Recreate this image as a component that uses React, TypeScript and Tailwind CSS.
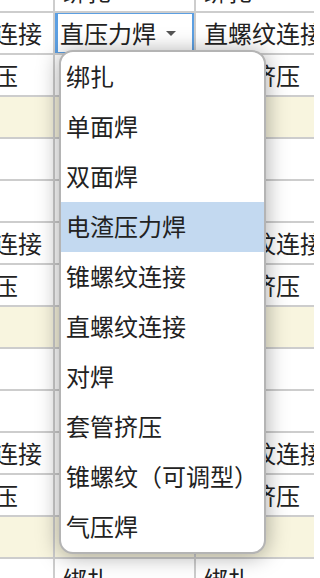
import React from 'react';

type Row = { cells: [string, string, string]; tone?: 'yellow' };

const rows: Row[] = [
  { cells: ['绑扎', '绑扎', '绑扎'] },
  { cells: ['直螺纹连接', '', '直螺纹连接'] },
  { cells: ['套管挤压', '', '套管挤压'] },
  { cells: ['', '', ''], tone: 'yellow' },
  { cells: ['', '', ''] },
  { cells: ['绑扎', '', '绑扎'] },
  { cells: ['直螺纹连接', '', '直螺纹连接'] },
  { cells: ['套管挤压', '', '套管挤压'] },
  { cells: ['', '', ''], tone: 'yellow' },
  { cells: ['', '', ''] },
  { cells: ['绑扎', '', '绑扎'] },
  { cells: ['直螺纹连接', '', '直螺纹连接'] },
  { cells: ['套管挤压', '', '套管挤压'] },
  { cells: ['', '', ''], tone: 'yellow' },
  { cells: ['绑扎', '绑扎', '绑扎'] },
];

const options = [
  '绑扎',
  '单面焊',
  '双面焊',
  '电渣压力焊',
  '锥螺纹连接',
  '直螺纹连接',
  '对焊',
  '套管挤压',
  '锥螺纹（可调型）',
  '气压焊',
];

const font = { fontFamily: '"Noto Sans CJK SC", "Noto Sans", sans-serif' };

const App: React.FC = () => {
  return (
    <div className="relative w-[314px] h-[578px] overflow-hidden bg-white text-[#222]" style={font}>
      {/* table is scrolled: first column partly off to the left */}
      <div className="ml-[-86px] mt-[-29px] w-[423px]">
        {rows.map((row, r) => (
          <div
            key={r}
            className={`grid grid-cols-[141px_141px_141px] h-[42px] ${row.tone === 'yellow' ? 'bg-[#f8f5df]' : ''}`}
          >
            {row.cells.map((text, c) => {
              const editing = r === 1 && c === 1;
              return (
                <div
                  key={c}
                  className="relative flex items-center pl-[8px] border-r-2 border-b-2 border-[#cdcdcd] text-[24px] leading-none whitespace-nowrap overflow-hidden"
                >
                  {editing ? (
                    <>
                      <div className="absolute left-0 top-[-2px] right-[-1px] bottom-[-2px] border-[3px] border-[#5c9fe2]" />
                      <span className="ml-[-3px]">直压力焊</span>
                      <span className="ml-[10px] mt-[1px] w-0 h-0 border-l-[5px] border-r-[5px] border-t-[5px] border-l-transparent border-r-transparent border-t-[#555]" />
                    </>
                  ) : (
                    text
                  )}
                </div>
              );
            })}
          </div>
        ))}
      </div>

      {/* open dropdown */}
      <div className="absolute left-[59px] top-[50px] w-[207px] h-[504px] rounded-[14px] border-2 border-[#b4b4b4] bg-white shadow-[0_2px_22px_rgba(0,0,0,0.35)] overflow-hidden">
        {options.map((opt, i) => (
          <div
            key={opt}
            className={`h-[50px] flex items-center pl-[5px] pb-[2px] text-[24px] leading-none whitespace-nowrap ${i === 3 ? 'bg-[#c3d9f0]' : ''}`}
          >
            {opt}
          </div>
        ))}
      </div>
    </div>
  );
};

export default App;
